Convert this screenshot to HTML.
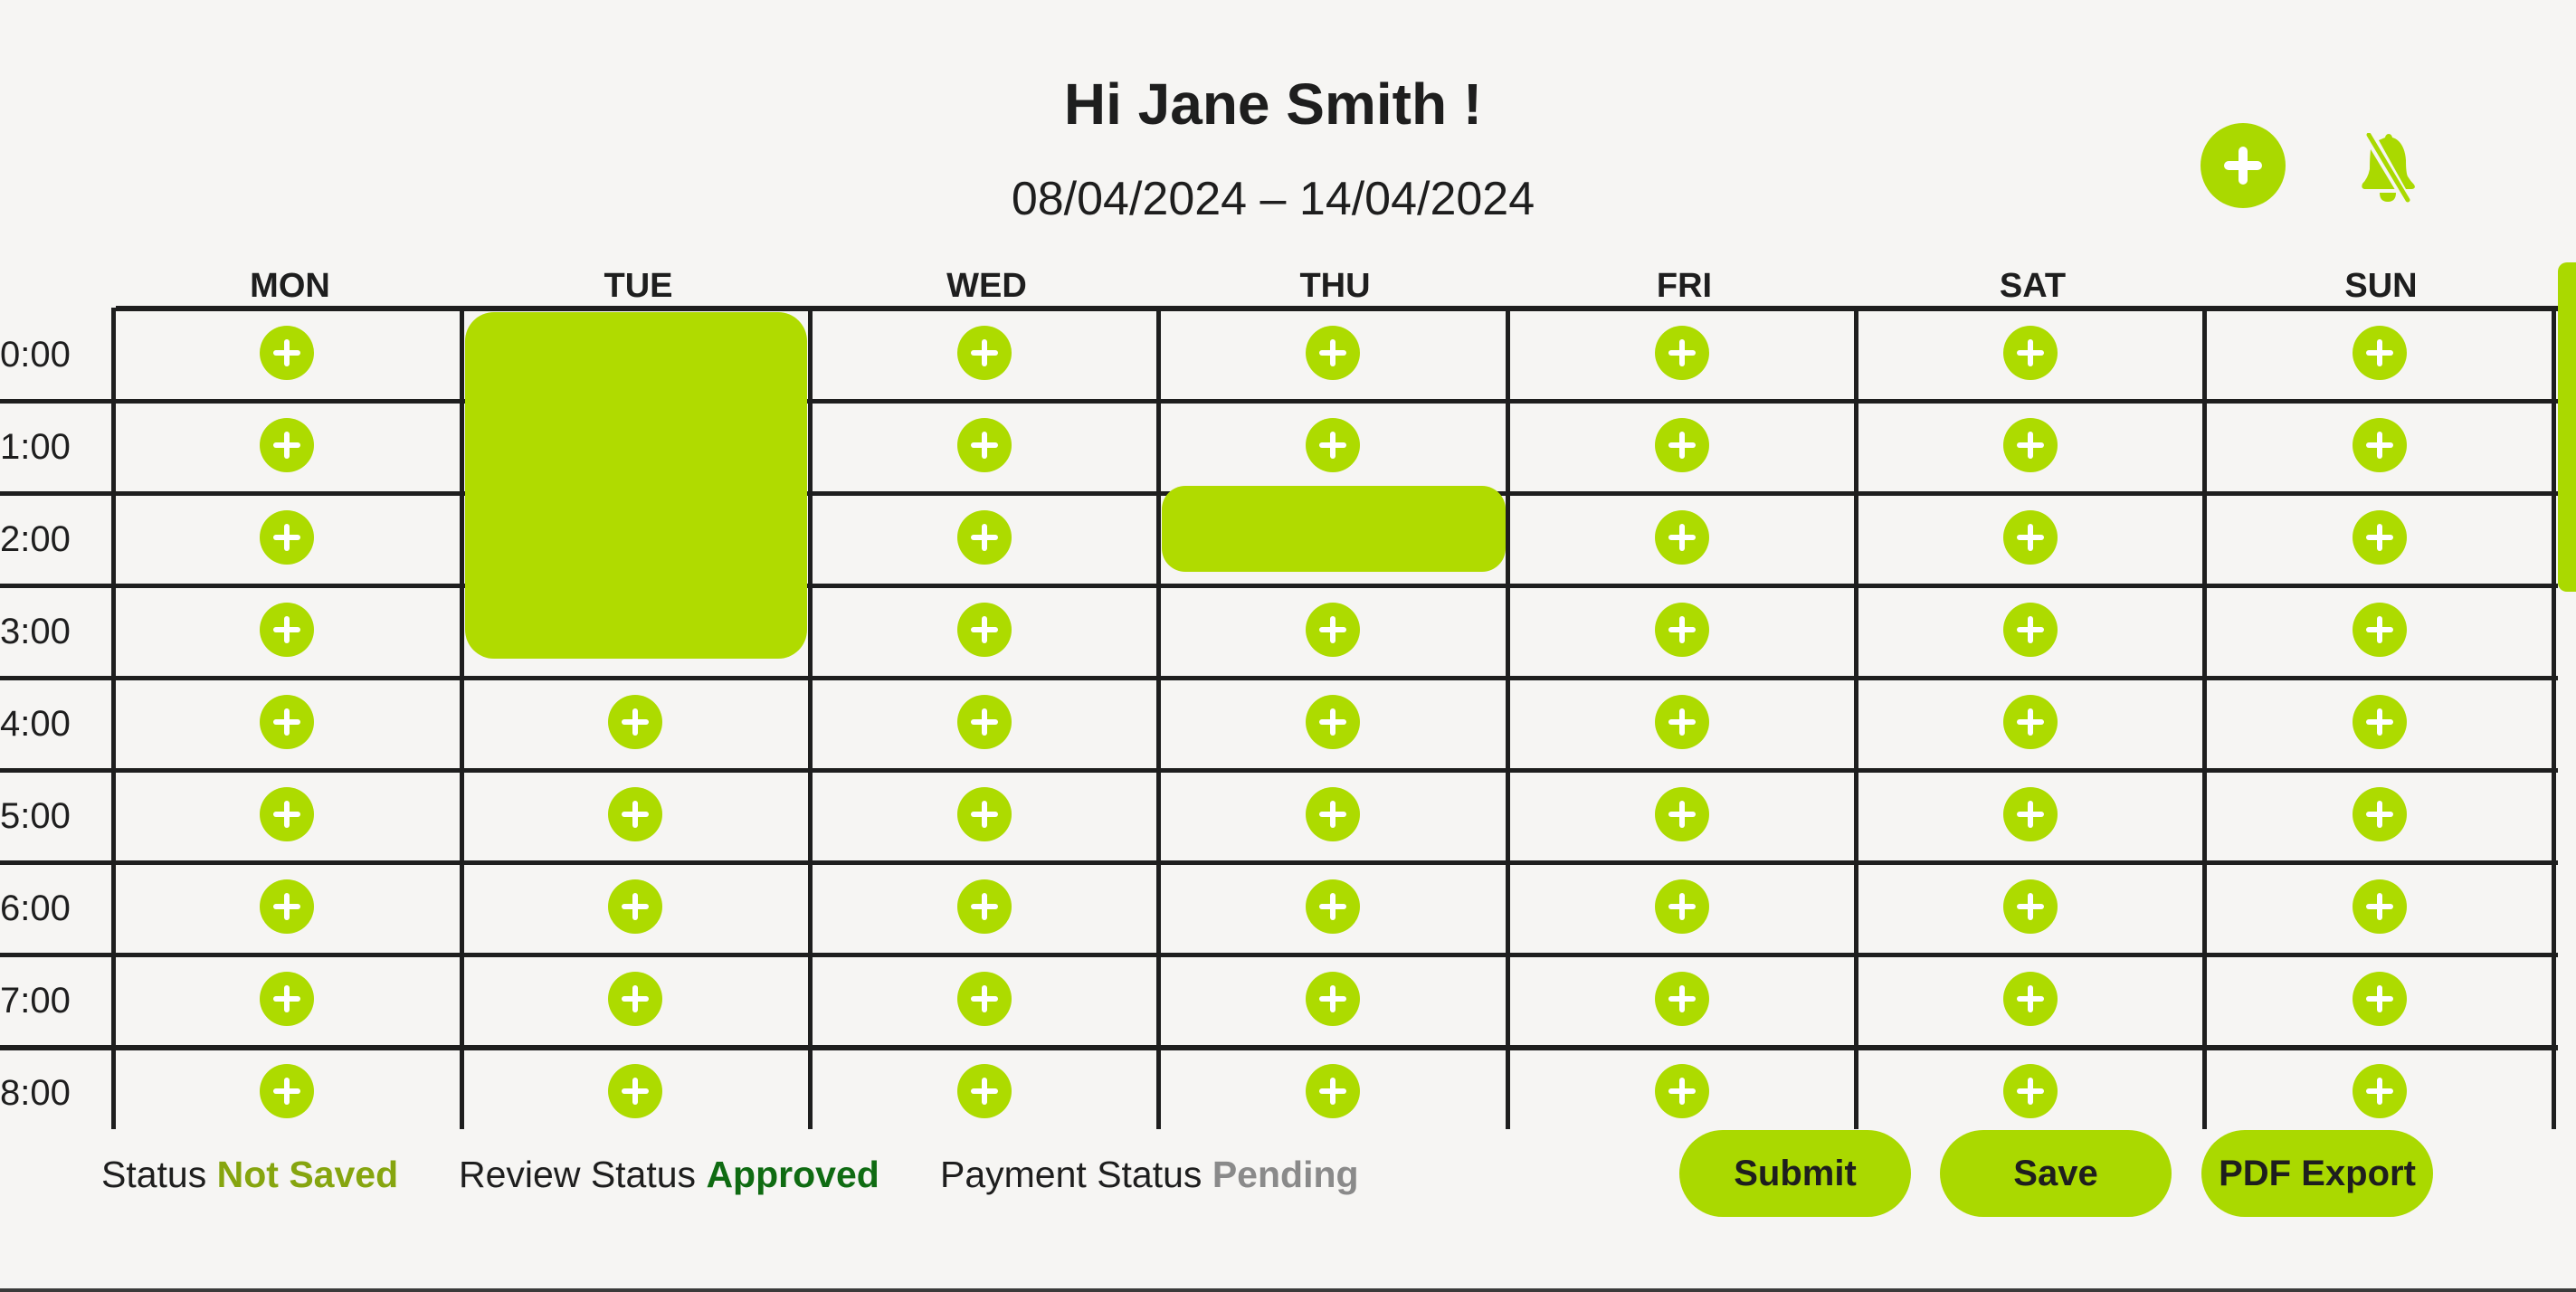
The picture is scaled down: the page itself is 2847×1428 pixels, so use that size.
<!DOCTYPE html>
<html><head><meta charset="utf-8"><style>
html,body{margin:0;padding:0;}
body{width:2847px;height:1428px;background:#f6f5f3;position:relative;overflow:hidden;font-family:"Liberation Sans",sans-serif;color:#1e1e1e;}
.a{position:absolute;}
.h{position:absolute;height:5px;background:#1e1e1e;}
.v{position:absolute;width:5px;background:#1e1e1e;top:340px;height:908px;}
.p{position:absolute;width:60px;height:60px;border-radius:50%;background:#addb00;}
.p:before{content:"";position:absolute;left:15px;top:27px;width:30px;height:6px;border-radius:3px;background:#fff;}
.p:after{content:"";position:absolute;left:27px;top:15px;width:6px;height:30px;border-radius:3px;background:#fff;}
.day{position:absolute;top:295px;width:385px;text-align:center;font-weight:bold;font-size:38px;}
.t{position:absolute;left:0;font-size:40px;}
.btn{position:absolute;top:1249px;height:96px;width:256px;border-radius:48px;background:#aad900;font-weight:bold;font-size:40px;line-height:96px;text-align:center;}
.st{position:absolute;top:1275px;font-size:41px;}
</style></head><body>
<div class="a" style="left:0;width:2814px;top:78px;text-align:center;font-weight:bold;font-size:64px;">Hi Jane Smith !</div>
<div class="a" style="left:0;width:2814px;top:190px;text-align:center;font-size:52px;">08/04/2024 – 14/04/2024</div>

<div class="a" style="left:2432px;top:136px;width:94px;height:94px;border-radius:50%;background:#aad900;"></div>
<div class="a" style="left:2458px;top:178px;width:42px;height:10px;border-radius:5px;background:#fff;"></div>
<div class="a" style="left:2474px;top:162px;width:10px;height:42px;border-radius:5px;background:#fff;"></div>

<svg class="a" style="left:2610px;top:147px" width="60" height="77" viewBox="0 0 60 77">
<path d="M10 18 Q9 28 9 40 Q7 50 1 56 Q-1 61 3 62 L36.6 62 Z" fill="#aad900"/>
<path d="M19 8 L26 5 Q27 1 30 1 Q33 1 34 5 Q38 6 41 9 Q48 16 49 30 Q49 44 51 48 Q54 53 58 57 Q61 62 54 62 L49 62 Z" fill="#aad900"/>
<path d="M20 66 L38 66 Q38 76 29 76 Q20 76 20 66 Z" fill="#aad900"/>
<line x1="8" y1="2" x2="51" y2="74" stroke="#aad900" stroke-width="5" stroke-linecap="round"/>
</svg>

<div class="day" style="left:128px">MON</div>
<div class="day" style="left:513px">TUE</div>
<div class="day" style="left:898px">WED</div>
<div class="day" style="left:1283px">THU</div>
<div class="day" style="left:1669px">FRI</div>
<div class="day" style="left:2054px">SAT</div>
<div class="day" style="left:2439px">SUN</div>

<div class="h" style="left:128px;width:2699px;top:338px;height:6px"></div>
<div class="h" style="left:0;width:2827px;top:441px"></div>
<div class="h" style="left:0;width:2827px;top:543px"></div>
<div class="h" style="left:0;width:2827px;top:645px"></div>
<div class="h" style="left:0;width:2827px;top:747px"></div>
<div class="h" style="left:0;width:2827px;top:849px"></div>
<div class="h" style="left:0;width:2827px;top:951px"></div>
<div class="h" style="left:0;width:2827px;top:1053px"></div>
<div class="h" style="left:0;width:2827px;top:1155px;height:6px"></div>

<div class="v" style="left:123px"></div>
<div class="v" style="left:508px"></div>
<div class="v" style="left:893px"></div>
<div class="v" style="left:1278px"></div>
<div class="v" style="left:1664px"></div>
<div class="v" style="left:2049px"></div>
<div class="v" style="left:2434px"></div>
<div class="v" style="left:2820px"></div>

<div class="a" style="left:2827px;top:290px;width:20px;height:364px;border-radius:10px 0 0 10px;background:#aad900;"></div>

<div class="t" style="top:370px">0:00</div>
<div class="t" style="top:472px">1:00</div>
<div class="t" style="top:574px">2:00</div>
<div class="t" style="top:676px">3:00</div>
<div class="t" style="top:778px">4:00</div>
<div class="t" style="top:880px">5:00</div>
<div class="t" style="top:982px">6:00</div>
<div class="t" style="top:1084px">7:00</div>
<div class="t" style="top:1186px">8:00</div>

<div id="plus"></div>
<script>
var cx=[317,702,1088,1473,1859,2244,2630];
var h="";
for(var r=0;r<9;r++){for(var c=0;c<7;c++){
 if(c==1&&r<4)continue;
 if(c==3&&r==2)continue;
 h+='<div class="p" style="left:'+(cx[c]-30)+'px;top:'+(360+r*102)+'px"></div>';
}}
document.getElementById("plus").innerHTML=h;
</script>

<div class="a" style="left:514px;top:345px;width:378px;height:383px;border-radius:32px;background:#b0db00;"></div>
<div class="a" style="left:1284px;top:537px;width:380px;height:95px;border-radius:26px;background:#b0db00;"></div>

<div class="st" style="left:112px">Status <b style="color:#86a50f">Not Saved</b></div>
<div class="st" style="left:507px">Review Status <b style="color:#0f6b12">Approved</b></div>
<div class="st" style="left:1039px">Payment Status <b style="color:#8a8a8a">Pending</b></div>

<div class="btn" style="left:1856px">Submit</div>
<div class="btn" style="left:2144px">Save</div>
<div class="btn" style="left:2433px">PDF Export</div>

<div class="a" style="left:0;top:1424px;width:2847px;height:4px;background:#3a3a3a;"></div>
</body></html>
